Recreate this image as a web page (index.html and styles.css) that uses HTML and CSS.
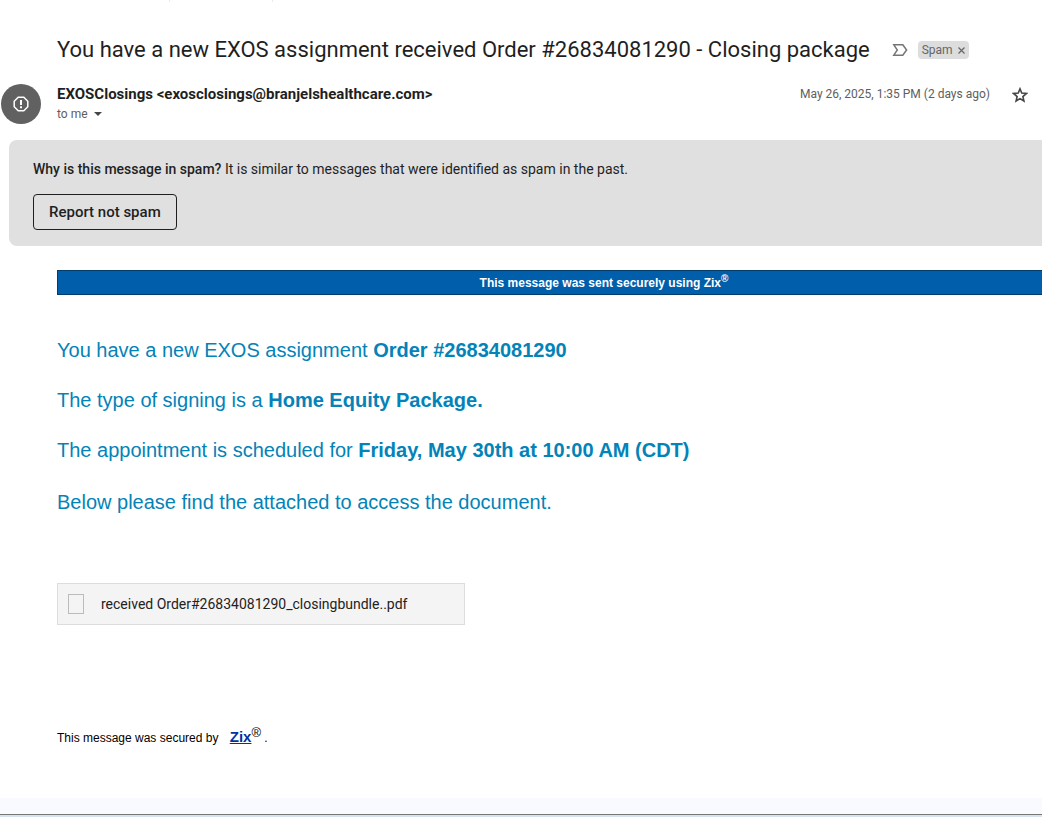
FILE: index.html
```html
<!DOCTYPE html>
<html lang="en">
<head>
    <meta charset="UTF-8">
    <meta name="viewport" content="width=device-width, initial-scale=1.0">
    <title>You have a new EXOS assignment</title>
    <link rel="stylesheet" href="styles.css">
</head>
<body>
    <main class="mail">
        <div class="toolbar-edge"><span></span><span></span></div>

        <div class="subject">
            <h1>You have a new EXOS assignment received Order #26834081290 - Closing package</h1>
            <svg class="important" width="16" height="14" viewBox="0 0 16 14" fill="none" stroke="#757575" stroke-width="1.500">
                <path d="M1.800 1.800h9l3.800 5.200-3.800 5.200h-9L5.300 7z"/>
            </svg>
            <span class="label">Spam <button type="button" aria-label="Remove label Spam"><svg width="7" height="7" viewBox="0 0 7 7" stroke="#666" stroke-width="1.200"><path d="M.5.5l6 6M6.500.5l-6 6"/></svg></button></span>
        </div>

        <header class="sender">
            <div class="avatar">
                <svg width="16" height="16" viewBox="0 0 16 16" fill="none" stroke="#fff" stroke-width="1.500">
                    <path d="M5.200 1.200h5.600l4 4v5.600l-4 4H5.200l-4-4V5.200z"/>
                    <path d="M8 4v5M8 10.300v2" stroke-width="2"/>
                </svg>
            </div>
            <div class="from">
                <strong>EXOSClosings &lt;exosclosings@branjelshealthcare.com&gt;</strong>
                <button type="button" class="to">to me
                    <svg width="8" height="4" viewBox="0 0 8 4"><path d="M0 0h8L4 4z" fill="#444746"/></svg>
                </button>
            </div>
            <time datetime="2025-05-26T13:35">May 26, 2025, 1:35 PM (2 days ago)</time>
            <button type="button" class="star" aria-label="Star">
                <svg width="16" height="16" viewBox="0 0 20 20" fill="none" stroke="#444746" stroke-width="2">
                    <path d="M10 2.300l2.200 5.300 5.800.5-4.400 3.800 1.300 5.600-4.900-3-4.900 3 1.300-5.600L2 8.100l5.800-.5z"/>
                </svg>
            </button>
        </header>

        <section class="spam-note">
            <p><b>Why is this message in spam?</b> It is similar to messages that were identified as spam in the past.</p>
            <button type="button">Report not spam</button>
        </section>

        <article class="message">
            <div class="zix-bar">This message was sent securely using Zix<sup>®</sup></div>
            <div class="details">
                <p>You have a new EXOS assignment <b>Order #26834081290</b></p>
                <p>The type of signing is a <b>Home Equity Package.</b></p>
                <p>The appointment is scheduled for <b>Friday, May 30th at 10:00 AM (CDT)</b></p>
                <p>Below please find the attached to access the document.</p>
            </div>
            <a href="#" class="attachment">
                <span class="file-icon"></span>
                received Order#26834081290_closingbundle..pdf
            </a>
            <p class="secured">This message was secured by <a href="#">Zix</a><sup>®</sup> .</p>
        </article>
    </main>
    <footer class="page-edge"></footer>
</body>
</html>
```
FILE: styles.css
```css
* {
    box-sizing: border-box;
}
body {
    margin: 0;
    min-height: 100vh;
    display: flex;
    flex-direction: column;
    background-color: #fff;
    color: #1f1f1f;
    font-family: "Google Sans", Roboto, Arial, sans-serif;
    font-size: 14px;
}
h1,
p {
    margin: 0;
}
button {
    font: inherit;
    color: inherit;
    background: none;
    border: none;
    padding: 0;
    cursor: pointer;
}
.mail {
    flex: 1;
}

/* bottom ends of the toolbar dividers */
.toolbar-edge {
    display: flex;
    gap: 102px;
    height: 2px;
    padding-left: 169px;
}
.toolbar-edge span {
    width: 1px;
    background-color: #e8eaed;
}

.subject {
    display: flex;
    align-items: center;
    padding: 34px 16px 0 57px;
}
.subject h1 {
    font-size: 22px;
    font-weight: 400;
    line-height: 28px;
}
.important {
    margin: 0 10px 0 22px;
    flex: none;
}
.label {
    display: flex;
    gap: 5px;
    padding: 0 4px;
    border-radius: 4px;
    background-color: #ddd;
    color: #666;
    font-size: 12px;
    line-height: 18px;
}
.label button {
    display: flex;
    align-items: center;
}

.sender {
    display: flex;
    padding: 20px 14px 0 1px;
}
.avatar {
    width: 40px;
    height: 40px;
    border-radius: 50%;
    background-color: #616161;
    display: flex;
    align-items: center;
    justify-content: center;
}
.from {
    flex: 1;
    margin-left: 16px;
    line-height: 20px;
}
.from strong {
    display: block;
    font-size: 15px;
}
.to {
    display: flex;
    align-items: center;
    gap: 6px;
    color: #5e5e5e;
    font-size: 12px;
    line-height: 20px;
}
.sender time {
    color: #5e5e5e;
    font-size: 12px;
    line-height: 20px;
}
.star {
    height: 22px;
    margin-left: 22px;
    display: flex;
    align-items: center;
}

.spam-note {
    margin: 16px 0 0 9px;
    padding: 19px 24px 16px;
    border-radius: 8px 0 0 8px;
    background-color: #e0e0e0;
    line-height: 20px;
}
.spam-note b {
    font-weight: 500;
}
.spam-note button {
    margin-top: 15px;
    height: 36px;
    padding: 0 15px;
    border: 1px solid #1f1f1f;
    border-radius: 4px;
    font-size: 15px;
    font-weight: 500;
}

.message {
    margin: 24px 0 0 57px;
    font-family: Arial, "Liberation Sans", sans-serif;
}
.zix-bar {
    padding-left: 108px;
    border: 1px solid #003d6d;
    border-right: none;
    background-color: #005eaa;
    color: #fff;
    font-size: 12px;
    font-weight: 700;
    line-height: 25px;
    height: 25px;
    text-align: center;
}
sup {
    font-size: 10px;
    line-height: 0;
}
.details {
    padding-top: 40px;
    color: #0383b7;
    font-size: 20px;
    line-height: 30px;
}
.details p {
    margin-bottom: 20px;
}
.details p:last-child {
    margin: 22px 0 0;
}
.attachment {
    display: flex;
    align-items: center;
    gap: 17px;
    width: 408px;
    height: 42px;
    margin-top: 66px;
    padding: 0 10px;
    border: 1px solid #ddd;
    background-color: #f4f4f4;
    color: #222;
    font-family: "Google Sans", Roboto, Arial, sans-serif;
    text-decoration: none;
}
.file-icon {
    width: 16px;
    height: 20px;
    border: 1px solid #bbb;
}
.secured {
    margin: 100px 0 40px;
    color: #000;
    font-size: 12px;
    line-height: 24px;
}
.secured a {
    margin-left: 8px;
    color: #0033a0;
    font-size: 15px;
    font-weight: 700;
}
.secured sup {
    font-size: 13px;
}

.page-edge {
    height: 19px;
    background-color: #d8e3f0;
    border-top: 16px solid #f8fafd;
    box-shadow: inset 0 1px #777;
}
```
